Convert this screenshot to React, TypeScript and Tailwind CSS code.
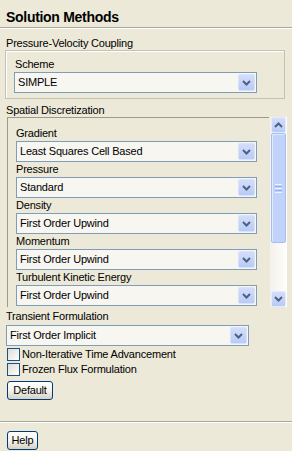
import React from "react";

function Chevron({ up = false }: { up?: boolean }) {
    return (
        <svg width="9" height="6" viewBox="0 0 9 6" className={up ? "rotate-180" : ""}>
            <polyline points="1,1 4.5,4.5 8,1" fill="none" stroke="#4d6185" strokeWidth="2" />
        </svg>
    );
}

function Combo({ value, width }: { value: string; width: string }) {
    return (
        <div className={`${width} h-[21px] flex border border-[#7f9db9] bg-[#f7f6f1]`}>
            <div className="flex-1 pl-[3px] leading-[19px] truncate">{value}</div>
            <div className="w-[17px] m-px flex items-center justify-center rounded-[2px] border border-[#d8e3fb] bg-gradient-to-b from-[#d3defb] to-[#b8cbf6]">
                <Chevron />
            </div>
        </div>
    );
}

function Checkbox({ label }: { label: string }) {
    return (
        <div className="h-[15px] flex items-center pl-[2px]">
            <div className="w-[13px] h-[13px] border border-[#1c5180] bg-gradient-to-br from-[#dcdcd7] to-white" />
            <span className="ml-[2px] leading-[15px]">{label}</span>
        </div>
    );
}

function XpButton({ label, width }: { label: string; width: string }) {
    return (
        <div className={`${width} h-[19px] ml-[2px] flex items-center justify-center rounded-[3px] border border-[#003c74] bg-gradient-to-b from-white via-[#f4f3ee] to-[#d6d0c5] leading-[17px]`}>
            {label}
        </div>
    );
}

const spatial = [
    ["Gradient", "Least Squares Cell Based"],
    ["Pressure", "Standard"],
    ["Density", "First Order Upwind"],
    ["Momentum", "First Order Upwind"],
    ["Turbulent Kinetic Energy", "First Order Upwind"],
];

export default function App() {
    return (
        <div className="w-[292px] h-[451px] overflow-hidden bg-[#ece9d8] text-black text-[11px] tracking-[-0.2px] font-['Liberation_Sans',Arial,sans-serif] flex flex-col">
            {/* Title */}
            <div className="h-[27px] pl-[6px] pt-[9px] text-[14px] leading-[16px] font-bold tracking-[-0.3px]">Solution Methods</div>
            <div className="h-px bg-[#aca899]" />
            <div className="h-px bg-white" />

            <div className="px-[5px] flex flex-col">
                {/* Pressure-Velocity Coupling */}
                <div className="mt-[7px] h-[14px] leading-[14px] pl-[1px]">Pressure-Velocity Coupling</div>
                <div className="h-[49px] w-[280px] border border-[#c5c2b2] shadow-[inset_1px_1px_0_#fff] pl-[8px] pt-[6px]">
                    <div className="h-[14px] leading-[14px] pl-px">Scheme</div>
                    <div className="mt-px">
                        <Combo value="SIMPLE" width="w-[243px]" />
                    </div>
                </div>

                {/* Spatial Discretization */}
                <div className="mt-[4px] h-[14px] leading-[14px] pl-[1px]">Spatial Discretization</div>
                <div className="flex ml-[2px]">
                    <div className="w-[262px] h-[190px] overflow-hidden border-l border-t border-[#9d9a8a] pl-[8px] pt-[8px]">
                        {spatial.map(([label, value]) => (
                            <div key={label}>
                                <div className="h-[15px] leading-[15px]">{label}</div>
                                <Combo value={value} width="w-[241px]" />
                            </div>
                        ))}
                    </div>
                    {/* Scrollbar */}
                    <div className="ml-[1px] w-[17px] h-[190px] flex flex-col bg-gradient-to-r from-[#f3f1ec] to-[#fefefb]">
                        <div className="h-[16px] mx-px flex items-center justify-center rounded-[2px] border border-[#e4ebfc] bg-gradient-to-b from-[#d3defb] to-[#b8cbf6]">
                            <Chevron up />
                        </div>
                        <div className="h-[110px] mx-px flex flex-col items-center justify-center gap-px rounded-[2px] border border-[#a8bdf2] bg-[#c1d3fb] shadow-[inset_1px_1px_0_#e2eafd]">
                            <div className="w-[7px] h-px bg-[#eef4fe]" />
                            <div className="w-[7px] h-px bg-[#8cb0f8]" />
                            <div className="w-[7px] h-px bg-[#eef4fe]" />
                            <div className="w-[7px] h-px bg-[#8cb0f8]" />
                            <div className="w-[7px] h-px bg-[#eef4fe]" />
                        </div>
                        <div className="flex-1" />
                        <div className="h-[16px] mx-px flex items-center justify-center rounded-[2px] border border-[#e4ebfc] bg-gradient-to-b from-[#d3defb] to-[#b8cbf6]">
                            <Chevron />
                        </div>
                    </div>
                </div>

                {/* Transient Formulation */}
                <div className="mt-[2px] h-[14px] leading-[14px] pl-[1px]">Transient Formulation</div>
                <div className="mt-[2px] ml-[1px]">
                    <Combo value="First Order Implicit" width="w-[243px]" />
                </div>
                <div className="mt-px">
                    <Checkbox label="Non-Iterative Time Advancement" />
                    <Checkbox label="Frozen Flux Formulation" />
                </div>
                <div className="mt-[4px]">
                    <XpButton label="Default" width="w-[46px]" />
                </div>
            </div>

            <div className="mt-[21px] h-px bg-[#aca899]" />
            <div className="h-px bg-white" />
            <div className="px-[5px] mt-[8px]">
                <XpButton label="Help" width="w-[31px]" />
            </div>
        </div>
    );
}
